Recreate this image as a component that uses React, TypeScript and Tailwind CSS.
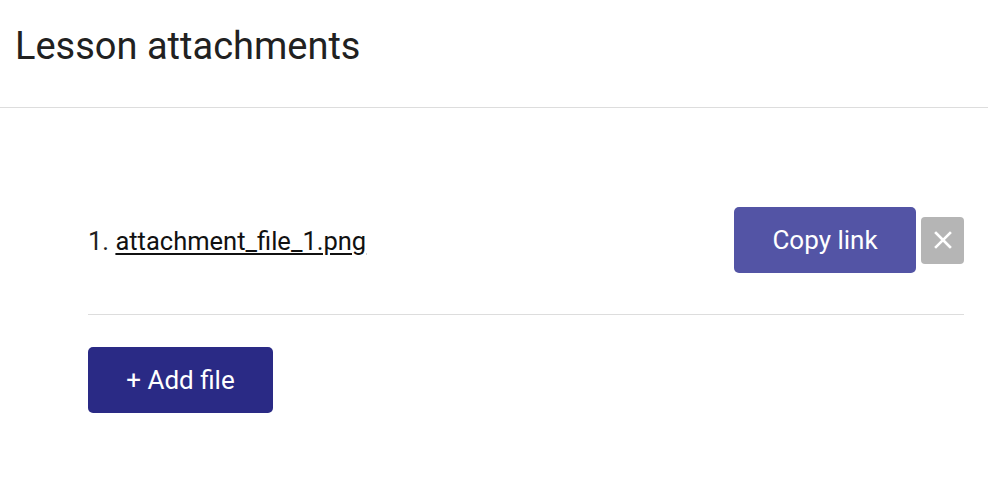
import React from 'react';

const files = ['attachment_file_1.png'];

const App: React.FC = () => {
  return (
    <div className="w-[988px] h-[500px] bg-white text-[#212121]" style={{ fontFamily: 'Roboto, "Liberation Sans", sans-serif' }}>
      <div className="h-[108px] border-b border-[#dddddd] px-[15px] pt-[22px]">
        <h1 className="text-[38px] leading-[48px] font-normal">Lesson attachments</h1>
      </div>

      <div className="pl-[88px] pr-[24px] pt-[99px]">
        <ol className="border-b border-[#dddddd] pb-[41px]">
          {files.map((f, i) => (
            <li key={f} className="flex items-center justify-between h-[66px]">
              <div className="text-[25.5px] leading-[30px] pt-[1px]">
                {i + 1}.{' '}
                <a href="#" className="underline underline-offset-[3px] decoration-[2px] text-[#111]">{f}</a>
              </div>
              <div className="flex items-center gap-[5px]">
                <button className="w-[182px] h-[66px] rounded-[5px] bg-[#5354a5] text-white text-[26px]">Copy link</button>
                <button className="w-[43px] h-[47px] rounded-[4px] bg-[#b5b5b5] flex items-center justify-center">
                  <svg width="20" height="20" viewBox="0 0 20 20" stroke="white" strokeWidth="2.6" strokeLinecap="square">
                    <path d="M3 3 L17 17 M17 3 L3 17" />
                  </svg>
                </button>
              </div>
            </li>
          ))}
        </ol>

        <button className="mt-[32px] w-[185px] h-[66px] rounded-[5px] bg-[#2a2a85] text-white text-[26px]">+ Add file</button>
      </div>
    </div>
  );
};

export default App;
